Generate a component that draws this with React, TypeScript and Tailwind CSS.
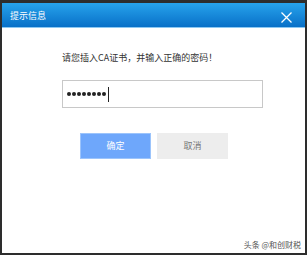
export default function App() {
  const dots = [0, 1, 2, 3, 4, 5, 6, 7];
  return (
    <div className="w-[307px] h-[255px] bg-[#2d2d2d] pt-[3px] px-[2px] pb-[2px] font-['Microsoft_YaHei','Noto_Sans_CJK_SC',sans-serif]">
      <div className="flex flex-col h-full bg-white">
        <div className="h-[25px] flex items-center justify-between pl-[8px] pr-[13px] bg-gradient-to-b from-[#27a3ec] to-[#0870c8] border-b-[1px] border-[#8cc8f2]">
          <span className="text-[9px] text-white leading-none">提示信息</span>
          <svg width="11" height="11" viewBox="0 0 11 11" className="mt-[5px]">
            <path d="M0.5 0.5 L10.5 10.5 M10.5 0.5 L0.5 10.5" stroke="#ffffff" strokeWidth="1.3" />
          </svg>
        </div>
        <div className="flex-1 flex flex-col pl-[60px] relative">
          <div className="mt-[25px] text-[9px] text-[#333333] leading-none">请您插入CA证书，并输入正确的密码！</div>
          <div className="mt-[18px] w-[201px] h-[28px] border border-[#c8c8c8] flex items-center pl-[4px] gap-[1.5px]">
            {dots.map((d) => (
              <span key={d} className="w-[3.5px] h-[3.5px] rounded-full bg-[#222222]" />
            ))}
            <span className="ml-[1px] w-[1px] h-[15px] bg-[#222222]" />
          </div>
          <div className="mt-[25px] flex gap-[6px] pl-[18px]">
            <div className="w-[71px] h-[26px] bg-[#6ea7fb] border border-[#9cc4fb] flex items-center justify-center text-[9px] text-white">确定</div>
            <div className="w-[71px] h-[26px] bg-[#ededed] flex items-center justify-center text-[9px] text-[#777777]">取消</div>
          </div>
          <div className="absolute right-[4px] bottom-[4px] text-[8px] text-[#555555] leading-none">头条 @和创财税</div>
        </div>
      </div>
    </div>
  );
}
